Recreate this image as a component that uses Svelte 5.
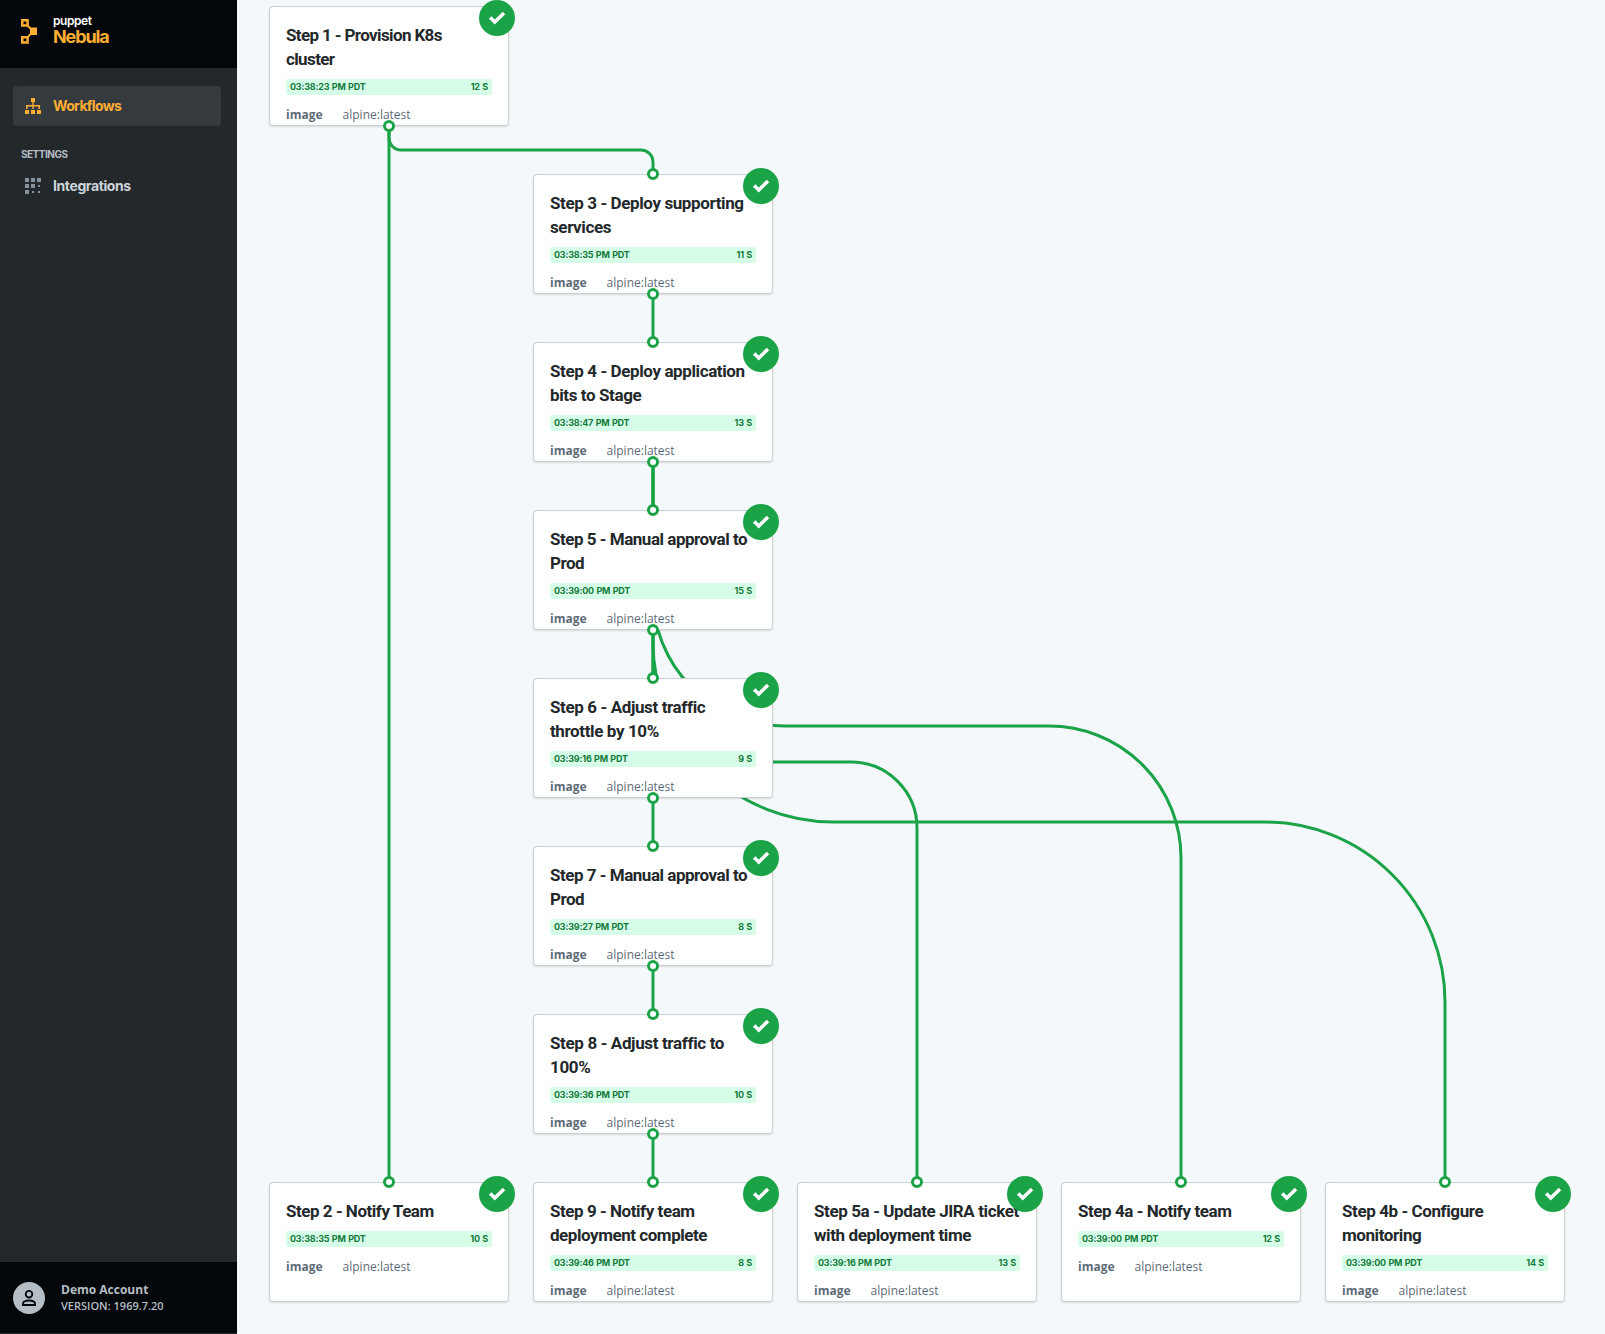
<script>
  const COL = 264;
  const ROW = 168;
  const LEFT = 32;
  const TOP = 6;

  const steps = [
    { col: 0, row: 0, title: ['Step 1 - Provision K8s', 'cluster'], time: '03:38:23 PM PDT', dur: '12 S', track: -0.62 },
    { col: 1, row: 1, title: ['Step 3 - Deploy supporting', 'services'], time: '03:38:35 PM PDT', dur: '11 S', track: -0.39 },
    { col: 1, row: 2, title: ['Step 4 - Deploy application', 'bits to Stage'], time: '03:38:47 PM PDT', dur: '13 S', track: -0.39 },
    { col: 1, row: 3, title: ['Step 5 - Manual approval to', 'Prod'], time: '03:39:00 PM PDT', dur: '15 S', track: -0.48 },
    { col: 1, row: 4, title: ['Step 6 - Adjust traffic', 'throttle by 10%'], time: '03:39:16 PM PDT', dur: '9 S', track: -0.38 },
    { col: 1, row: 5, title: ['Step 7 - Manual approval to', 'Prod'], time: '03:39:27 PM PDT', dur: '8 S', track: -0.48 },
    { col: 1, row: 6, title: ['Step 8 - Adjust traffic to', '100%'], time: '03:39:36 PM PDT', dur: '10 S', track: -0.36 },
    { col: 0, row: 7, title: ['Step 2 - Notify Team'], time: '03:38:35 PM PDT', dur: '10 S', track: -0.47 },
    { col: 1, row: 7, title: ['Step 9 - Notify team', 'deployment complete'], time: '03:39:46 PM PDT', dur: '8 S', track: -0.45 },
    { col: 2, row: 7, title: ['Step 5a - Update JIRA ticket', 'with deployment time'], time: '03:39:16 PM PDT', dur: '13 S', track: -0.39 },
    { col: 3, row: 7, title: ['Step 4a - Notify team'], time: '03:39:00 PM PDT', dur: '12 S', track: -0.44 },
    { col: 4, row: 7, title: ['Step 4b - Configure', 'monitoring'], time: '03:39:00 PM PDT', dur: '14 S', track: -0.41 }
  ].map((s) => ({ ...s, x: LEFT + s.col * COL, y: TOP + s.row * ROW }));

  // Connectors: straight runs joined by quarter circles of radius r
  const bend = (x1, y1, x2, y2, mid, r) =>
    `M${x1} ${y1}V${mid - r}A${r} ${r} 0 0 0 ${x1 + r} ${mid}H${x2 - r}A${r} ${r} 0 0 1 ${x2} ${mid + r}V${y2}`;

  const edges = [
    'M152 126V1182',
    bend(152, 126, 416, 174, 150, 12),
    ...[1, 2, 3, 4, 5, 6].map((r) => `M416 ${TOP + r * ROW + 120}V${TOP + (r + 1) * ROW}`),
    bend(416, 630, 680, 1182, 762, 66),
    bend(416, 462, 944, 1182, 726, 132),
    bend(416, 462, 1208, 1182, 822, 180)
  ];

  const pins = [
    ...steps.filter((s) => s.row > 0).map((s) => [s.x + 120, s.y]),
    ...steps.filter((s) => s.row < 7).map((s) => [s.x + 120, s.y + 120])
  ];
</script>

<div class="app">
  <aside>
    <header>
      <svg class="logo" width="16" height="25" viewBox="0 0 16 25">
        <path d="M1.25 1.25h5.3v5.3h-5.3zM1.25 18.2h5.3v5.3h-5.3z" fill="none" stroke="#ffae33" stroke-width="2.5" />
        <path d="M6.5 6.5l5 5M6.5 18.3l5-5.5" stroke="#ffae33" stroke-width="2" />
        <path d="M9 8.5h7v7.5H9z" fill="#ffae33" />
      </svg>
      <div class="brand">
        <span class="puppet">puppet</span>
        <span class="nebula">Nebula</span>
      </div>
    </header>

    <nav>
      <a class="item active">
        <svg width="16" height="16" viewBox="0 0 16 16" fill="currentColor">
          <path d="M6 0h4v4H6zM0 12h4v4H0zM6 12h4v4H6zM12 12h4v4h-4z" />
          <path d="M7.3 4h1.4v3H15v4h-1.5V8.5H8.7V11H7.3V8.5H2.5V11H1V7h6.3z" />
        </svg>
        <span>Workflows</span>
      </a>
      <div class="section">SETTINGS</div>
      <a class="item integrations">
        <svg width="16" height="16" viewBox="0 0 16 16" fill="#84939c">
          <path d="M0 0h4v4H0zM6 0h4v4H6zM12 0h4v4h-4zM0 6h4v4H0zM6 6h4v4H6zM13 7h2v2h-2zM0 12h4v4H0zM7 13h2v2H7zM13 13h2v2h-2z" />
        </svg>
        <span>Integrations</span>
      </a>
    </nav>

    <footer>
      <svg width="32" height="32" viewBox="0 0 32 32">
        <circle cx="16" cy="16" r="16" fill="#b5bec5" />
        <circle cx="16" cy="12.2" r="3.3" fill="none" stroke="#04080a" stroke-width="1.8" />
        <path d="M9.9 23v-.9c0-2.4 3-3.6 6.1-3.6s6.1 1.2 6.1 3.6v.9z" fill="none" stroke="#04080a" stroke-width="1.8" />
      </svg>
      <div class="account">
        <span class="name">Demo Account</span>
        <span class="version">VERSION: 1969.7.20</span>
      </div>
    </footer>
  </aside>

  <main>
    <svg class="layer" width="1368" height="1334">
      {#each edges as d}
        <path {d} fill="none" stroke="#1ba348" stroke-width="3" />
      {/each}
    </svg>

    {#each steps as s}
      <article style:left="{s.x}px" style:top="{s.y}px">
        <div class="body">
          <h3 style:letter-spacing="{s.track}px">
            {#each s.title as line}<span>{line}</span>{/each}
          </h3>
          <div class="bar"><span>{s.time}</span><span>{s.dur}</span></div>
          <div class="meta"><b>image</b><span>alpine:latest</span></div>
        </div>
        <svg class="badge" width="36" height="36" viewBox="0 0 36 36">
          <circle cx="18" cy="18" r="18" fill="#1ba348" />
          <path d="M11.2 17.5l4.6 4.5 9.2-9.1" fill="none" stroke="#fff" stroke-width="3.5" />
        </svg>
      </article>
    {/each}

    <svg class="layer" width="1368" height="1334">
      {#each pins as [x, y]}
        <circle cx={x} cy={y} r="4.5" fill="#fff" stroke="#1ba348" stroke-width="3" />
      {/each}
    </svg>
  </main>
</div>

<style>
  .app {
    display: flex;
    width: 1605px;
    height: 1334px;
    overflow: hidden;
    font-family: Inter, sans-serif;
  }
  aside {
    display: flex;
    flex-direction: column;
    width: 237px;
    flex: none;
    background: #23282b;
  }
  header {
    display: flex;
    height: 68px;
    box-sizing: border-box;
    padding: 15px 0 0 21px;
    background: #030709;
  }
  .logo {
    margin-top: 4px;
  }
  .brand {
    display: flex;
    flex-direction: column;
    margin-left: 16px;
    font-weight: 700;
  }
  .puppet {
    font-size: 12px;
    line-height: 12px;
    font-weight: 600;
    letter-spacing: -0.45px;
    color: #fff;
  }
  .nebula {
    font-size: 18px;
    line-height: 20px;
    letter-spacing: -1.1px;
    color: #ffae33;
  }
  nav {
    flex: 1;
    padding: 18px 16px 0 13px;
  }
  .item {
    display: flex;
    align-items: center;
    gap: 12px;
    height: 40px;
    padding-left: 12px;
    border-radius: 4px;
    font-size: 14px;
    font-weight: 700;
    letter-spacing: -0.65px;
    color: #cdd5da;
  }
  .item span {
    padding-bottom: 2px;
  }
  .integrations {
    letter-spacing: -0.4px;
  }
  .active {
    background: #353a3e;
    color: #ffae33;
  }
  .section {
    padding: 20px 0 0 8px;
    font-size: 10px;
    line-height: 16px;
    height: 5px;
    font-weight: 700;
    letter-spacing: -0.5px;
    color: #b5bec5;
    margin-bottom: 15px;
  }
  footer {
    display: flex;
    align-items: center;
    gap: 16px;
    height: 71px;
    padding-left: 13px;
    border-bottom: 1px solid #23282b;
    background: #030709;
    color: #b5bec5;
    font-family: 'Open Sans', sans-serif;
  }
  .account {
    display: flex;
    flex-direction: column;
    font-weight: 600;
  }
  .name {
    font-size: 12px;
    line-height: 16px;
    font-weight: 700;
  }
  .version {
    font-size: 11px;
    line-height: 16px;
  }
  main {
    position: relative;
    flex: 1;
    background: #f4f8fb;
  }
  .layer {
    position: absolute;
    left: 0;
    top: 0;
  }
  article {
    position: absolute;
    width: 240px;
    height: 120px;
  }
  .body {
    box-sizing: border-box;
    height: 120px;
    overflow: hidden;
    padding: 16px;
    border: 1px solid #c8d0d6;
    border-radius: 4px;
    background: #fff;
    box-shadow: 0 1px 2px rgba(35, 40, 43, 0.14);
  }
  h3 {
    margin: 0 0 8px;
    font-family: Roboto, sans-serif;
    font-size: 17px;
    line-height: 24px;
    font-weight: 700;
    color: #23282b;
    white-space: nowrap;
  }
  h3 span {
    display: block;
  }
  .bar {
    display: flex;
    justify-content: space-between;
    height: 16px;
    padding: 0 4px;
    border-radius: 2px;
    background: #d6fde8;
    color: #147a3b;
    font-size: 9px;
    line-height: 16px;
    font-weight: 700;
    letter-spacing: -0.22px;
    word-spacing: 0.6px;
  }
  .meta {
    display: flex;
    gap: 20px;
    margin-top: 11px;
    font-family: 'Open Sans', sans-serif;
    font-size: 12px;
    line-height: 17px;
    color: #5c6b76;
  }
  .badge {
    position: absolute;
    right: -6px;
    top: -6px;
  }
</style>
